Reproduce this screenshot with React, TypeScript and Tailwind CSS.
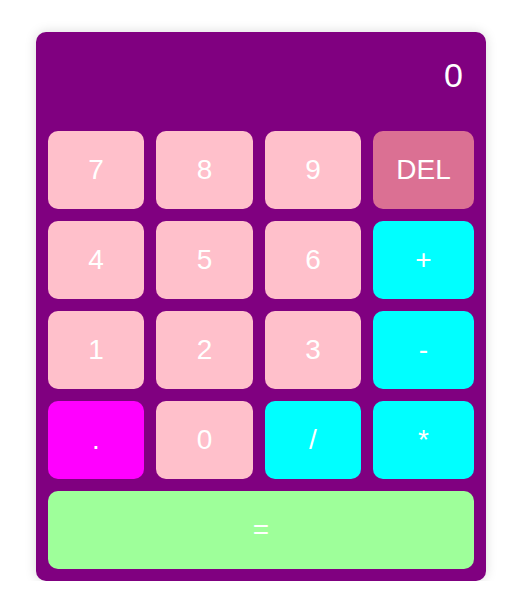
const keys = [
  { label: "7", bg: "bg-[#ffc0cb]" },
  { label: "8", bg: "bg-[#ffc0cb]" },
  { label: "9", bg: "bg-[#ffc0cb]" },
  { label: "DEL", bg: "bg-[#db7093]" },
  { label: "4", bg: "bg-[#ffc0cb]" },
  { label: "5", bg: "bg-[#ffc0cb]" },
  { label: "6", bg: "bg-[#ffc0cb]" },
  { label: "+", bg: "bg-[#00ffff]" },
  { label: "1", bg: "bg-[#ffc0cb]" },
  { label: "2", bg: "bg-[#ffc0cb]" },
  { label: "3", bg: "bg-[#ffc0cb]" },
  { label: "-", bg: "bg-[#00ffff]" },
  { label: ".", bg: "bg-[#ff00ff]" },
  { label: "0", bg: "bg-[#ffc0cb]" },
  { label: "/", bg: "bg-[#00ffff]" },
  { label: "*", bg: "bg-[#00ffff]" },
];

const App = () => {
  return (
    <div className="pt-8 pl-9 font-['Liberation_Sans',Arial,sans-serif]">
      <div className="w-[450px] p-3 bg-[#800080] rounded-[10px] shadow-[0_0_12px_rgba(0,0,0,0.15)]">
        <div className="h-[75px] pt-[14px] pr-[11px] text-right text-white text-[34px] leading-[34px] mb-3">
          0
        </div>
        <div className="grid grid-cols-[96px_97px_96px_101px] gap-3">
          {keys.map((k) => (
            <button
              key={k.label}
              className={`h-[78px] rounded-[10px] text-white text-[28px] ${k.bg}`}
            >
              {k.label}
            </button>
          ))}
          <button className="col-span-4 h-[78px] rounded-[10px] text-white text-[28px] bg-[#9eff9a]">
            =
          </button>
        </div>
      </div>
    </div>
  );
};
export default App;
